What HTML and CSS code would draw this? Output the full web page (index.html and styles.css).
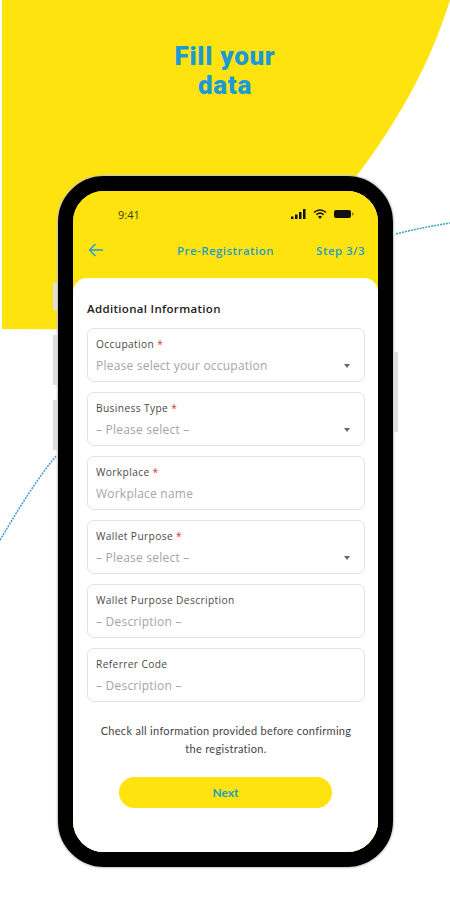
FILE: index.html
```html
<!DOCTYPE html>
<html lang="en">
<head>
    <meta charset="UTF-8">
    <meta name="viewport" content="width=device-width, initial-scale=1.0">
    <title>Fill your data</title>
    <link rel="stylesheet" href="styles.css">
</head>
<body>
    <svg class="backdrop" width="450" height="900" viewBox="0 0 450 900">
        <path d="M2 0H450C428 70 395 125 355 178L200 330L2 329Z" fill="#ffe30f"/>
        <path class="dots" d="M396 234C415 229 432 226 450 223"/>
        <path class="dots" d="M0 540C18 510 36 480 56 456"/>
    </svg>

    <header class="hero">
        <h1>Fill your<br>data</h1>
    </header>

    <div class="phone">
        <span class="side-btn side-mute"></span>
        <span class="side-btn side-up"></span>
        <span class="side-btn side-down"></span>
        <span class="side-btn side-power"></span>

        <div class="screen">
            <div class="status-bar">
                <span class="clock">9:41</span>
                <div class="status-icons">
                    <svg width="16" height="10" viewBox="0 0 16 10"><rect x="0" y="7.500" width="2.500" height="2.500"/><rect x="4" y="5.500" width="2.500" height="4.500"/><rect x="8" y="3" width="2.500" height="7"/><rect x="12" y="0" width="2.500" height="10"/></svg>
                    <svg width="14" height="10" viewBox="0 0 14 10"><path class="wifi" d="M1 3.500C4.500 .2 9.500 .2 13 3.500M3.300 5.800C5.500 3.800 8.500 3.800 10.700 5.800"/><path d="M5 7.600C6.200 6.600 7.800 6.600 9 7.600L7 10Z"/></svg>
                    <svg width="21" height="10" viewBox="0 0 21 10"><rect x="1" y="1" width="17" height="8" rx="2"/><rect x="19" y="3.500" width="1.500" height="3" rx=".7" opacity=".5"/></svg>
                </div>
            </div>

            <nav class="top-bar">
                <svg class="back" width="16" height="14" viewBox="0 0 16 14"><path d="M15 7H1.500M7.500 1L1.500 7L7.500 13"/></svg>
                <span class="top-title">Pre-Registration</span>
                <span class="top-step">Step 3/3</span>
            </nav>

            <main class="sheet">
                <h2>Additional Information</h2>

                <div class="field">
                    <label>Occupation <i>*</i></label>
                    <div class="value">Please select your occupation<span class="caret"></span></div>
                </div>
                <div class="field">
                    <label>Business Type <i>*</i></label>
                    <div class="value">– Please select –<span class="caret"></span></div>
                </div>
                <div class="field">
                    <label>Workplace <i>*</i></label>
                    <div class="value">Workplace name</div>
                </div>
                <div class="field">
                    <label>Wallet Purpose <i>*</i></label>
                    <div class="value">– Please select –<span class="caret"></span></div>
                </div>
                <div class="field">
                    <label>Wallet Purpose Description</label>
                    <div class="value">– Description –</div>
                </div>
                <div class="field">
                    <label>Referrer Code</label>
                    <div class="value">– Description –</div>
                </div>

                <p class="note">Check all information provided before confirming the registration.</p>
                <a href="#" class="next-button">Next</a>
            </main>
        </div>
    </div>
</body>
</html>
```

FILE: styles.css
```css
body {
    margin: 0;
    height: 900px;
    overflow: hidden;
    position: relative;
    background-color: #fff;
    font-family: "Open Sans", sans-serif;
}

.backdrop {
    position: absolute;
    top: 0;
    left: 0;
}

.dots {
    fill: none;
    stroke: #3d9cd8;
    stroke-width: 1.500;
    stroke-dasharray: 2 1;
}

.hero {
    position: relative;
    height: 176px;
    padding-top: 42px;
    box-sizing: border-box;
}

.hero h1 {
    margin: 0;
    text-align: center;
    font-family: Roboto, sans-serif;
    font-size: 26px;
    line-height: 29px;
    font-weight: 900;
    letter-spacing: .7px;
    color: #1b9ad6;
}

.phone {
    position: relative;
    box-sizing: border-box;
    width: 335px;
    height: 691px;
    margin-left: 58px;
    border: 15px solid #000;
    border-radius: 46px;
    box-shadow: 0 0 2px 1px #c4c4c4;
}

.side-btn {
    position: absolute;
    width: 4px;
    background-color: #dedede;
}

.side-mute {
    left: -20px;
    top: 92px;
    height: 27px;
}

.side-up {
    left: -20px;
    top: 144px;
    height: 50px;
}

.side-down {
    left: -20px;
    top: 209px;
    height: 50px;
}

.side-power {
    right: -20px;
    top: 161px;
    height: 80px;
}

.screen {
    height: 100%;
    border-radius: 31px;
    overflow: hidden;
    background-color: #ffe30f;
    display: flex;
    flex-direction: column;
}

.status-bar {
    display: flex;
    justify-content: space-between;
    align-items: center;
    height: 14px;
    margin-top: 16px;
    padding: 0 24px 0 45px;
}

.clock {
    font-size: 11px;
    color: #3a3a20;
}

.status-icons {
    display: flex;
    align-items: center;
    gap: 6px;
}

.status-icons svg {
    fill: #111;
}

.status-icons .wifi {
    fill: none;
    stroke: #111;
    stroke-width: 1.500;
}

.top-bar {
    position: relative;
    display: flex;
    justify-content: space-between;
    align-items: center;
    height: 20px;
    margin-top: 19px;
    padding: 0 13px 0 15px;
    font-size: 11.500px;
    font-weight: 600;
    letter-spacing: .45px;
    color: #1f9cc8;
}

.back {
    fill: none;
    stroke: #1f9cd0;
    stroke-width: 1.400;
}

.top-title {
    position: absolute;
    left: 0;
    right: 0;
    text-align: center;
}

.sheet {
    flex: 1;
    margin-top: 18px;
    padding: 22px 13px 0 14px;
    background-color: #fff;
    border-radius: 14px 14px 0 0;
}

.sheet h2 {
    margin: 0 0 11px;
    font-size: 11.500px;
    line-height: 17px;
    font-weight: 600;
    letter-spacing: .32px;
    color: #1c1c1c;
}

.field {
    box-sizing: border-box;
    height: 54px;
    margin-bottom: 10px;
    padding: 8px 9px 0 8px;
    border: 1px solid #e2e2e2;
    border-radius: 7px;
}

.field label {
    display: block;
    font-size: 10.200px;
    line-height: 14px;
    letter-spacing: .38px;
    color: #4a4a4a;
}

.field label i {
    font-style: normal;
    color: #e0322d;
}

.value {
    display: flex;
    justify-content: space-between;
    align-items: center;
    margin-top: 6px;
    font-size: 12px;
    line-height: 17px;
    letter-spacing: .22px;
    color: #a5a5a5;
}

.caret {
    width: 0;
    height: 0;
    margin-right: 5px;
    border-left: 3.500px solid transparent;
    border-right: 3.500px solid transparent;
    border-top: 4px solid #666;
}

.note {
    margin: 20px 0 0;
    padding: 0 12px;
    font-family: Lato, sans-serif;
    font-size: 11px;
    line-height: 18px;
    letter-spacing: .3px;
    text-align: center;
    color: #444;
}

.next-button {
    display: block;
    width: 213px;
    margin: 19px 0 0 32px;
    background-color: #ffe30f;
    border-radius: 16px;
    color: #1f9cc0;
    font-family: Lato, sans-serif;
    font-size: 12px;
    font-weight: 700;
    line-height: 31px;
    text-align: center;
    text-decoration: none;
}
```
